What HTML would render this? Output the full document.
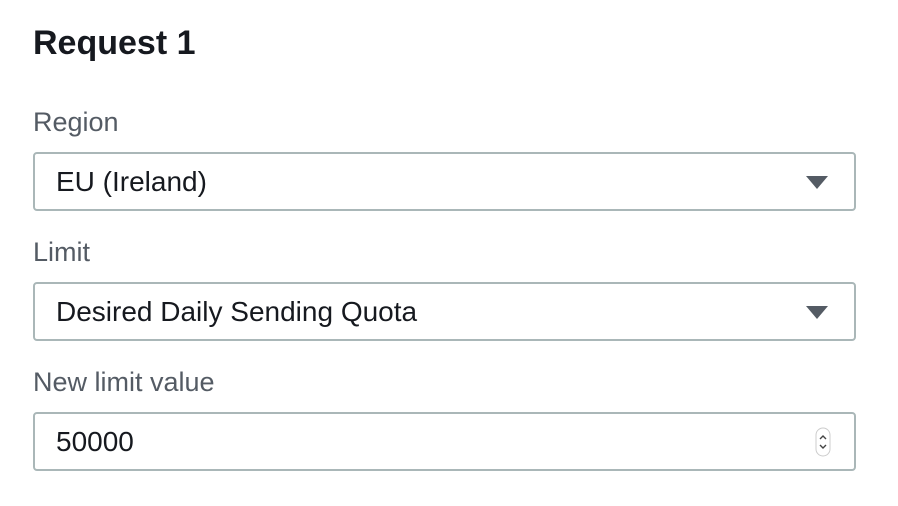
<!DOCTYPE html>
<html><head><style>
body{margin:0;width:898px;height:506px;background:#fff;font-family:"Liberation Sans",sans-serif;position:relative;overflow:hidden}
.t{position:absolute;left:33px;top:24px;font-size:34px;font-weight:bold;color:#16191f}
.l{position:absolute;left:33px;font-size:27px;color:#545b64}
.b{position:absolute;left:33px;width:819px;height:55px;border:2px solid #aab7b8;border-radius:4px;box-sizing:content-box}
.v{position:absolute;left:21px;top:12px;font-size:28px;color:#16191f}
.a{position:absolute;right:26px;top:22px;width:0;height:0;border-left:11px solid transparent;border-right:11px solid transparent;border-top:13px solid #545b64}
</style></head><body>
<div class="t">Request 1</div>
<div class="l" style="top:107px">Region</div>
<div class="b" style="top:152px"><div class="v">EU (Ireland)</div><div class="a"></div></div>
<div class="l" style="top:237px">Limit</div>
<div class="b" style="top:282px"><div class="v">Desired Daily Sending Quota</div><div class="a"></div></div>
<div class="l" style="top:367px">New limit value</div>
<div class="b" style="top:412px"><div class="v">50000</div>
<svg style="position:absolute;left:780px;top:13px" width="16" height="30" viewBox="0 0 16 30"><rect x="1" y="1" width="14" height="28" rx="7" fill="#fff" stroke="#ccc"/><path d="M5 12l3-3 3 3M5 18l3 3 3-3" fill="none" stroke="#444" stroke-width="1.4"/></svg>
</div>
</body></html>
